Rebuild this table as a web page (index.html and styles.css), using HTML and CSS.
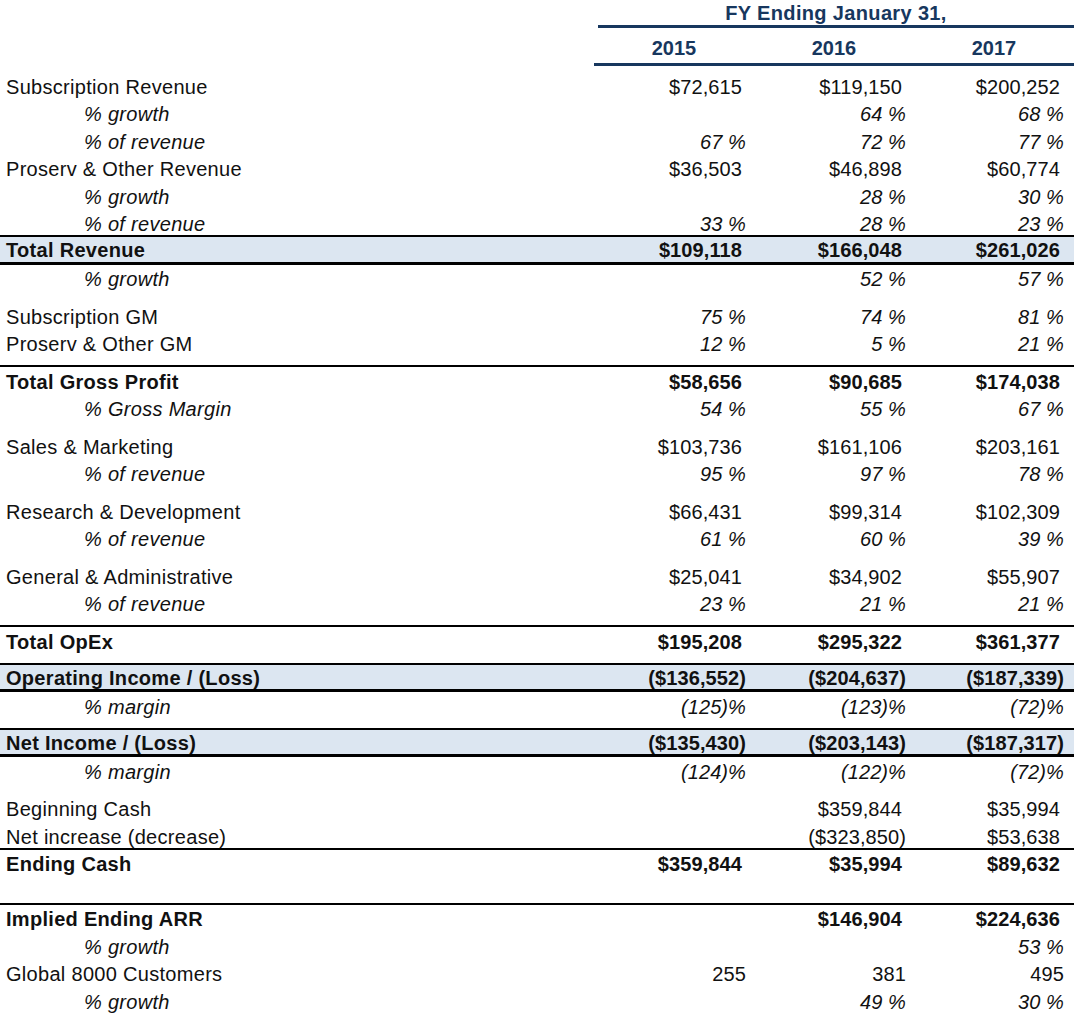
FILE: index.html
```html
<!DOCTYPE html>
<html lang="en">
<head>
<meta charset="utf-8">
<title>FY Financial Summary</title>
<link rel="stylesheet" href="styles.css">
</head>
<body>
<div class="sheet">
  <div class="head-fy">
    <div></div>
    <div class="fy-title">FY Ending January 31,</div>
  </div>
  <div class="head-years">
    <div></div>
    <div class="years">
      <div class="yr">2015</div>
      <div class="yr">2016</div>
      <div class="yr">2017</div>
    </div>
  </div>

  <div class="row first">
    <div class="lbl">Subscription Revenue</div>
    <div class="v pos">$72,615</div><div class="v pos">$119,150</div><div class="v pos">$200,252</div>
  </div>
  <div class="row sub">
    <div class="lbl">% growth</div>
    <div class="v"></div><div class="v">64 %</div><div class="v">68 %</div>
  </div>
  <div class="row sub">
    <div class="lbl">% of revenue</div>
    <div class="v">67 %</div><div class="v">72 %</div><div class="v">77 %</div>
  </div>
  <div class="row">
    <div class="lbl">Proserv &amp; Other Revenue</div>
    <div class="v pos">$36,503</div><div class="v pos">$46,898</div><div class="v pos">$60,774</div>
  </div>
  <div class="row sub">
    <div class="lbl">% growth</div>
    <div class="v"></div><div class="v">28 %</div><div class="v">30 %</div>
  </div>
  <div class="row sub">
    <div class="lbl">% of revenue</div>
    <div class="v">33 %</div><div class="v">28 %</div><div class="v">23 %</div>
  </div>
  <div class="row bold hl">
    <div class="lbl">Total Revenue</div>
    <div class="v pos">$109,118</div><div class="v pos">$166,048</div><div class="v pos">$261,026</div>
  </div>
  <div class="row sub">
    <div class="lbl">% growth</div>
    <div class="v"></div><div class="v">52 %</div><div class="v">57 %</div>
  </div>

  <div class="row gap">
    <div class="lbl">Subscription GM</div>
    <div class="v it">75 %</div><div class="v it">74 %</div><div class="v it">81 %</div>
  </div>
  <div class="row">
    <div class="lbl">Proserv &amp; Other GM</div>
    <div class="v it">12 %</div><div class="v it">5 %</div><div class="v it">21 %</div>
  </div>

  <div class="row gap bold rule">
    <div class="lbl">Total Gross Profit</div>
    <div class="v pos">$58,656</div><div class="v pos">$90,685</div><div class="v pos">$174,038</div>
  </div>
  <div class="row sub">
    <div class="lbl">% Gross Margin</div>
    <div class="v">54 %</div><div class="v">55 %</div><div class="v">67 %</div>
  </div>

  <div class="row gap">
    <div class="lbl">Sales &amp; Marketing</div>
    <div class="v pos">$103,736</div><div class="v pos">$161,106</div><div class="v pos">$203,161</div>
  </div>
  <div class="row sub">
    <div class="lbl">% of revenue</div>
    <div class="v">95 %</div><div class="v">97 %</div><div class="v">78 %</div>
  </div>

  <div class="row gap">
    <div class="lbl">Research &amp; Development</div>
    <div class="v pos">$66,431</div><div class="v pos">$99,314</div><div class="v pos">$102,309</div>
  </div>
  <div class="row sub">
    <div class="lbl">% of revenue</div>
    <div class="v">61 %</div><div class="v">60 %</div><div class="v">39 %</div>
  </div>

  <div class="row gap">
    <div class="lbl">General &amp; Administrative</div>
    <div class="v pos">$25,041</div><div class="v pos">$34,902</div><div class="v pos">$55,907</div>
  </div>
  <div class="row sub">
    <div class="lbl">% of revenue</div>
    <div class="v">23 %</div><div class="v">21 %</div><div class="v">21 %</div>
  </div>

  <div class="row gap bold rule">
    <div class="lbl">Total OpEx</div>
    <div class="v pos">$195,208</div><div class="v pos">$295,322</div><div class="v pos">$361,377</div>
  </div>

  <div class="row gap bold hl">
    <div class="lbl">Operating Income / (Loss)</div>
    <div class="v">($136,552)</div><div class="v">($204,637)</div><div class="v">($187,339)</div>
  </div>
  <div class="row sub">
    <div class="lbl">% margin</div>
    <div class="v">(125)%</div><div class="v">(123)%</div><div class="v">(72)%</div>
  </div>

  <div class="row gap bold hl">
    <div class="lbl">Net Income / (Loss)</div>
    <div class="v">($135,430)</div><div class="v">($203,143)</div><div class="v">($187,317)</div>
  </div>
  <div class="row sub">
    <div class="lbl">% margin</div>
    <div class="v">(124)%</div><div class="v">(122)%</div><div class="v">(72)%</div>
  </div>

  <div class="row gap">
    <div class="lbl">Beginning Cash</div>
    <div class="v"></div><div class="v pos">$359,844</div><div class="v pos">$35,994</div>
  </div>
  <div class="row">
    <div class="lbl">Net increase (decrease)</div>
    <div class="v"></div><div class="v">($323,850)</div><div class="v pos">$53,638</div>
  </div>
  <div class="row bold rule">
    <div class="lbl">Ending Cash</div>
    <div class="v pos">$359,844</div><div class="v pos">$35,994</div><div class="v pos">$89,632</div>
  </div>
  <div class="row"></div>
  <div class="row bold rule">
    <div class="lbl">Implied Ending ARR</div>
    <div class="v"></div><div class="v pos">$146,904</div><div class="v pos">$224,636</div>
  </div>
  <div class="row sub">
    <div class="lbl">% growth</div>
    <div class="v"></div><div class="v"></div><div class="v">53 %</div>
  </div>
  <div class="row">
    <div class="lbl">Global 8000 Customers</div>
    <div class="v">255</div><div class="v">381</div><div class="v">495</div>
  </div>
  <div class="row sub">
    <div class="lbl">% growth</div>
    <div class="v"></div><div class="v">49 %</div><div class="v">30 %</div>
  </div>
</div>
</body>
</html>
```

FILE: styles.css
```css
html, body {
  margin: 0;
  padding: 0;
  background: #ffffff;
}

.sheet {
  width: 1074px;
  font-family: "Liberation Sans", Arial, sans-serif;
  font-size: 20px;
  color: #111111;
}

.head-fy,
.head-years {
  display: grid;
  grid-template-columns: 594px 480px;
}

.head-fy {
  height: 28px;
}

.fy-title {
  margin-left: 4px;
  height: 25px;
  line-height: 27px;
  border-bottom: 3px solid #17375e;
  text-align: center;
  font-weight: bold;
  color: #17375e;
  letter-spacing: 0.35px;
}

.years {
  display: grid;
  grid-template-columns: 160px 160px 160px;
  height: 35px;
  align-items: end;
  border-bottom: 3px solid #17375e;
  margin-bottom: 6px;
}

.yr {
  text-align: center;
  font-weight: bold;
  color: #17375e;
  line-height: 23px;
  padding-bottom: 3px;
}

.row {
  display: grid;
  grid-template-columns: 594px 160px 160px 158px;
  height: 27.5px;
  align-items: center;
  line-height: 23px;
  white-space: nowrap;
}

.row > div {
  padding-top: 3px;
}

.row.hl > div {
  padding-top: 0;
}

.row.gap {
  margin-top: 10px;
}

.lbl {
  padding-left: 6px;
  letter-spacing: 0.3px;
}

.v {
  text-align: right;
  padding-right: 8px;
  letter-spacing: 0.1px;
}

.v.pos {
  padding-right: 12px;
}

.it {
  font-style: italic;
}

.sub {
  font-style: italic;
}

.sub .lbl {
  padding-left: 84px;
}

.bold {
  font-weight: bold;
}

.rule {
  box-shadow: 0 -2px 0 #000000;
}

.hl {
  background: #dce6f1;
  box-shadow: 0 -2px 0 #000000, inset 0 -3px 0 #000000;
}
```
